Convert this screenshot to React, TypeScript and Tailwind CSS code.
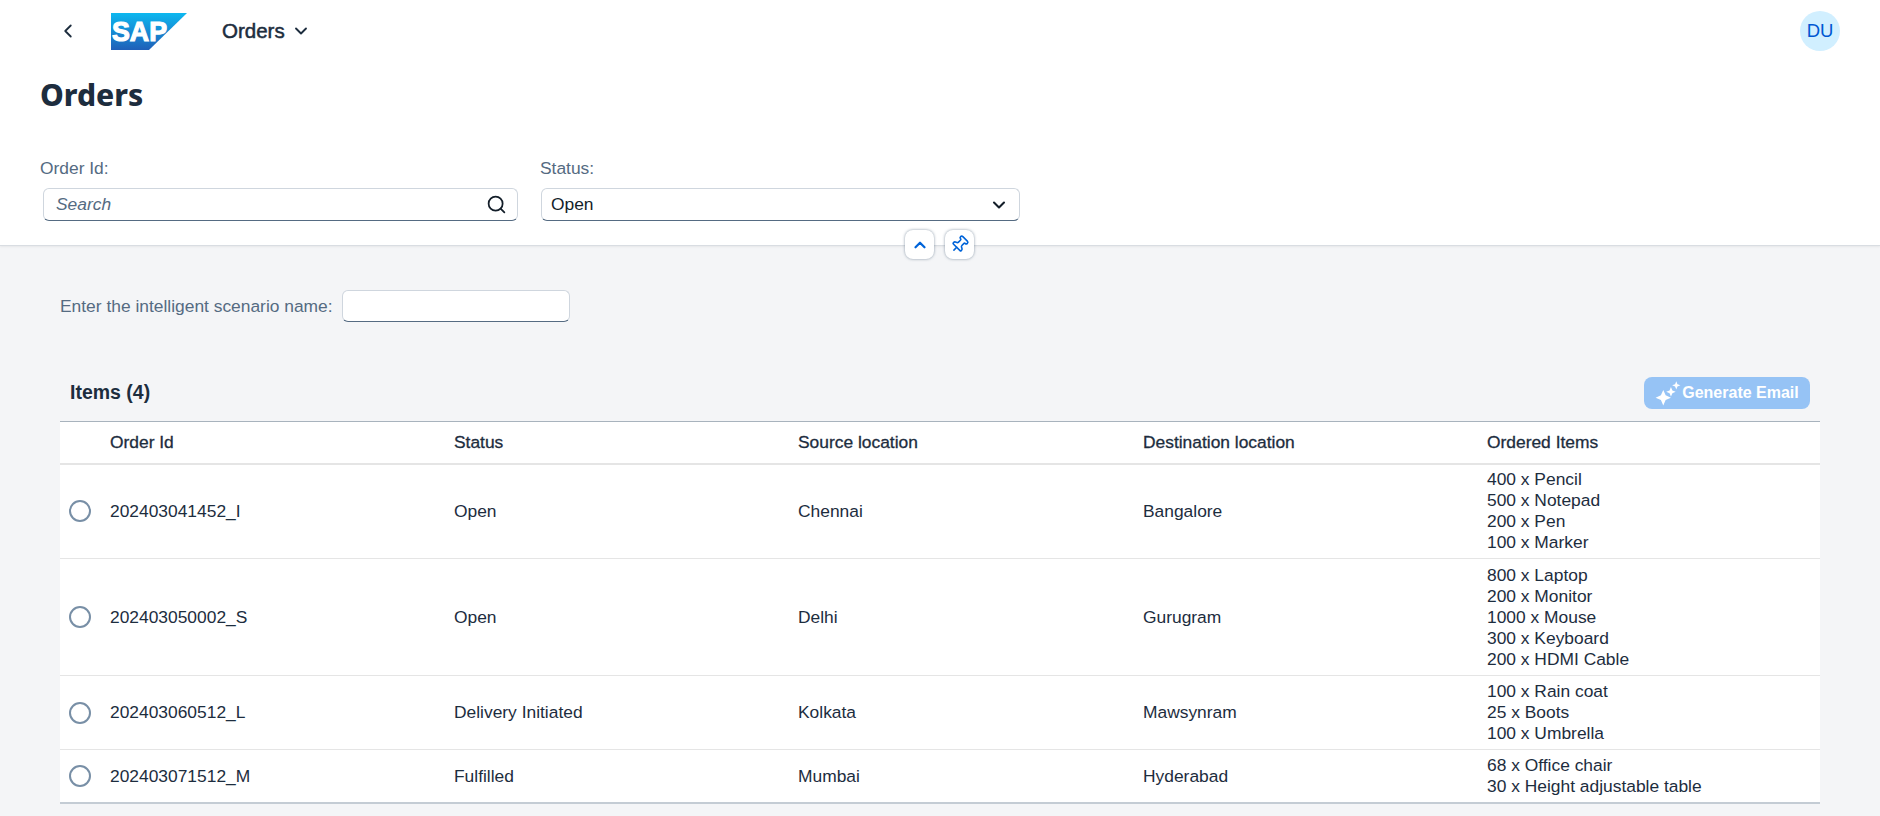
import { ChevronDown, ChevronLeft, ChevronUp, Pin, Search } from "lucide-react";

const ORDERS = [
  { id: "202403041452_I", status: "Open", source: "Chennai", dest: "Bangalore", items: ["400 x Pencil", "500 x Notepad", "200 x Pen", "100 x Marker"], rowClass: "h-[95px]" },
  { id: "202403050002_S", status: "Open", source: "Delhi", dest: "Gurugram", items: ["800 x Laptop", "200 x Monitor", "1000 x Mouse", "300 x Keyboard", "200 x HDMI Cable"], rowClass: "h-[117px]" },
  { id: "202403060512_L", status: "Delivery Initiated", source: "Kolkata", dest: "Mawsynram", items: ["100 x Rain coat", "25 x Boots", "100 x Umbrella"], rowClass: "h-[74px]" },
  { id: "202403071512_M", status: "Fulfilled", source: "Mumbai", dest: "Hyderabad", items: ["68 x Office chair", "30 x Height adjustable table"], rowClass: "h-[53px]" },
];

function SapLogo() {
  return (
    <svg width="76" height="37" viewBox="0 0 76 37" className="block">
      <defs>
        <linearGradient id="sapGrad" x1="0" y1="0" x2="0" y2="1">
          <stop offset="0" stopColor="#0db8f0" />
          <stop offset="1" stopColor="#1f5fb8" />
        </linearGradient>
      </defs>
      <polygon points="0,0 76,0 38,37 0,37" fill="url(#sapGrad)" />
      <text x="1" y="28" fill="#ffffff" stroke="#ffffff" strokeWidth="1.2" fontFamily="Liberation Sans" fontWeight="700" fontSize="28" textLength="55" lengthAdjust="spacingAndGlyphs">
        SAP
      </text>
    </svg>
  );
}

function Sparkle() {
  return (
    <svg width="26" height="26" viewBox="0 0 22 22" fill="#ffffff">
      <path d="M7 8.5 L9 13 L13.5 15 L9 17 L7 21.5 L5 17 L0.5 15 L5 13 Z" />
      <path d="M13.5 6 L14.7 8.8 L17.5 10 L14.7 11.2 L13.5 14 L12.3 11.2 L9.5 10 L12.3 8.8 Z" />
      <path d="M18 1 L19 3.5 L21.5 4.5 L19 5.5 L18 8 L17 5.5 L14.5 4.5 L17 3.5 Z" />
    </svg>
  );
}

export default function App() {
  return (
    <div className="min-h-[816px] bg-[#f4f5f7] text-[#1d2d3e] text-[17.4px] font-['Liberation_Sans',sans-serif]">
      {/* Shell + header */}
      <div className="relative h-[246px] bg-white border-b border-[#d9dde2] shadow-[0_1px_2px_rgba(0,0,0,0.06)]">
        <div className="flex items-center h-[52px] pt-[10px] pl-[57px] pr-[40px]">
          <ChevronLeft className="w-[22px] h-[22px]" strokeWidth={2} />
          <div className="ml-[32px]">
            <SapLogo />
          </div>
          <span className="ml-[35px] text-[20.5px] [-webkit-text-stroke:0.5px]">Orders</span>
          <ChevronDown className="ml-[6px] w-[20px] h-[20px]" strokeWidth={2.25} />
          <div className="ml-auto w-[40px] h-[40px] rounded-full bg-[#d1efff] text-[#0057d2] text-[18.5px] flex items-center justify-center">
            DU
          </div>
        </div>

        <h1 className="pl-[40px] mt-[25px] text-[30px] leading-[36px] font-extrabold font-['Noto_Sans',sans-serif]">Orders</h1>

        <div className="flex mt-[45px] pl-[40px]">
          <div className="w-[500px]">
            <div className="text-[#556b82] leading-[20px]">Order Id:</div>
            <div className="ml-[3px] mt-[10px] w-[475px] h-[33px] bg-white rounded-[6px] border border-[#cfd6de] border-b-[#556b82] flex items-center justify-between pl-[12px] pr-[10px]">
              <span className="italic text-[#556b82]">Search</span>
              <Search className="w-[21px] h-[21px] text-[#131e29]" strokeWidth={2} />
            </div>
          </div>
          <div>
            <div className="text-[#556b82] leading-[20px]">Status:</div>
            <div className="ml-[1px] mt-[10px] w-[479px] h-[33px] bg-white rounded-[6px] border border-[#cfd6de] border-b-[#556b82] flex items-center justify-between pl-[9px] pr-[10px] text-[#131e29]">
              <span>Open</span>
              <ChevronDown className="w-[20px] h-[20px]" strokeWidth={2.5} />
            </div>
          </div>
        </div>

        {/* collapse and pin sit over the header edge */}
        <div className="absolute left-[905px] top-[230px] flex gap-[11px]">
          <button className="w-[29px] h-[29px] rounded-[8px] bg-white shadow-[0_0_3px_rgba(85,107,130,0.7)] flex items-center justify-center text-[#0064d9]">
            <ChevronUp className="w-[18px] h-[18px]" strokeWidth={3} />
          </button>
          <button className="w-[29px] h-[29px] rounded-[8px] bg-white shadow-[0_0_3px_rgba(85,107,130,0.7)] flex items-center justify-center text-[#0064d9]">
            <Pin className="w-[19px] h-[19px] rotate-45" strokeWidth={2} />
          </button>
        </div>
      </div>

      {/* Content */}
      <div className="px-[60px]">
        <div className="flex items-center pt-[44px]">
          <span className="text-[#556b82]">Enter the intelligent scenario name:</span>
          <div className="ml-[9px] w-[228px] h-[32px] bg-white rounded-[6px] border border-[#cfd6de] border-b-[#556b82]" />
        </div>

        <div className="flex items-center justify-between h-[32px] mt-[55px] pl-[10px] pr-[10px]">
          <span className="font-bold text-[19.5px]">Items (4)</span>
          <button className="h-[32px] w-[166px] rounded-[8px] bg-[#96c3f5] text-white text-[16px] font-bold flex items-center justify-center gap-[1px]">
            <Sparkle />
            Generate Email
          </button>
        </div>

        <table className="w-full mt-[12px] table-fixed bg-white border-b-2 border-b-[#c4ccd4]">
          <thead>
            <tr className="h-[42px] border-t border-t-[#a8b3bd] border-b-2 border-b-[#e5e5e5] text-left">
              <th className="w-[50px]" />
              <th className="w-[344px] font-normal [-webkit-text-stroke:0.3px]">Order Id</th>
              <th className="w-[344px] font-normal [-webkit-text-stroke:0.3px]">Status</th>
              <th className="w-[345px] font-normal [-webkit-text-stroke:0.3px]">Source location</th>
              <th className="w-[344px] font-normal [-webkit-text-stroke:0.3px]">Destination location</th>
              <th className="font-normal [-webkit-text-stroke:0.3px]">Ordered Items</th>
            </tr>
          </thead>
          <tbody>
            {ORDERS.map((o, i) => (
              <tr key={o.id} className={`${o.rowClass} ${i < ORDERS.length - 1 ? "border-b border-b-[#e5e5e5]" : ""}`}>
                <td className="pl-[9px]">
                  <div className="w-[22px] h-[22px] rounded-full bg-white border-2 border-[#788fa6]" />
                </td>
                <td>{o.id}</td>
                <td>{o.status}</td>
                <td>{o.source}</td>
                <td>{o.dest}</td>
                <td className="leading-[21px]">
                  {o.items.map((it) => (
                    <div key={it}>{it}</div>
                  ))}
                </td>
              </tr>
            ))}
          </tbody>
        </table>
      </div>
    </div>
  );
}
